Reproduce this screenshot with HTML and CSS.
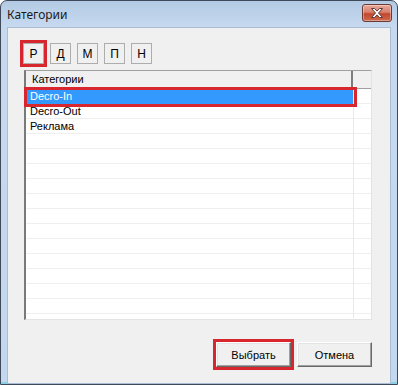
FILE: index.html
```html
<!DOCTYPE html>
<html lang="ru">
<head>
  <meta charset="UTF-8" />
  <title>Категории</title>
  <link rel="stylesheet" href="styles.css">
</head>
<body>
  <div class="window">
    <div class="titlebar">
      <span class="title">Категории</span>
      <button class="close" title="Закрыть">
        <svg width="14" height="10" viewBox="0 0 14 10">
          <path d="M1.5 0.5h3l2.5 2.6 2.5-2.6h3l-4 4.5 4 4.5h-3l-2.5-2.6-2.5 2.6h-3l4-4.5z" fill="#fff" stroke="#5a3b36" stroke-width="1" stroke-linejoin="round"/>
        </svg>
      </button>
    </div>

    <div class="client">
      <div class="letters">
        <button class="key marked">Р</button>
        <button class="key">Д</button>
        <button class="key">М</button>
        <button class="key">П</button>
        <button class="key">Н</button>
      </div>

      <div class="grid">
        <div class="grid-head">
          <div class="head-col">Категории</div>
          <div class="head-rest"></div>
        </div>
        <div class="grid-body">
          <div class="row selected"><span class="cell">Decro-In</span></div>
          <div class="row"><span class="cell">Decro-Out</span></div>
          <div class="row"><span class="cell">Реклама</span></div>
        </div>
      </div>

      <div class="actions">
        <button class="btn marked">Выбрать</button>
        <button class="btn">Отмена</button>
      </div>
    </div>
  </div>
</body>
</html>
```

FILE: styles.css
```css
body {
  margin: 0;
  background: #fff;
  font-family: "Liberation Sans", Arial, sans-serif;
}
.window {
  box-sizing: border-box;
  width: 398px;
  height: 385px;
  border: 1px solid #3e4a5a;
  border-radius: 7px 7px 0 0;
  padding: 0 7px 3px 7px;
  background: linear-gradient(to bottom, #b4cae4 0, #c6d9ef 26px, #c3d7ee 100%);
  box-shadow: inset 0 -2px 0 #8ad0e6;
}
.titlebar {
  height: 26px;
  display: flex;
  align-items: flex-start;
  justify-content: space-between;
}
.title {
  margin-left: -1px;
  margin-top: 5px;
  font-family: "Noto Sans", "Liberation Sans", sans-serif;
  font-size: 12px;
  color: #1a1a1a;
}
.close {
  width: 30px;
  height: 18px;
  margin-top: 3px;
  margin-right: -2px;
  padding: 0;
  border: 1px solid #6b3a33;
  border-radius: 3px;
  background: linear-gradient(to bottom, #e9a99c 0, #d8806d 45%, #c2472f 55%, #cf6a4c 100%);
  box-shadow: inset 0 0 0 1px rgba(255, 255, 255, 0.35);
  display: flex;
  align-items: center;
  justify-content: center;
}
.client {
  box-sizing: border-box;
  height: 355px;
  margin-top: 1px;
  background: #f0f0f0;
  padding: 15px 18px 15px 15px;
  box-shadow: 0 0 0 1px #a9bdd4;
}
.letters {
  display: flex;
  gap: 6px;
}
.key {
  width: 21px;
  height: 21px;
  padding: 0;
  border: 1px solid #adadad;
  background: #f0f0f0;
  font-family: "Liberation Sans", Arial, sans-serif;
  font-size: 12px;
  color: #000;
}
.marked {
  outline: 3px solid #d8262f;
}
.grid {
  box-sizing: border-box;
  width: 348px;
  height: 250px;
  margin: 6px 0 0 1px;
  border-style: solid;
  border-width: 1px 1px 1px 2px;
  border-color: #a0a0a0 #e3e3e3 #e3e3e3 #7a7a7a;
  background: #fff;
  font-size: 11px;
}
.grid-head {
  display: flex;
  height: 18px;
  background: #f0f0f0;
  border-bottom: 1px solid #a0a0a0;
  box-sizing: border-box;
}
.head-col {
  box-sizing: border-box;
  width: 327px;
  padding-left: 6px;
  line-height: 17px;
  border-right: 2px solid #7d7d7d;
}
.head-rest {
  flex: 1;
}
.grid-body {
  height: 229px;
  background:
    linear-gradient(to right, transparent 327px, #e8e8e8 327px, #e8e8e8 328px, transparent 328px),
    repeating-linear-gradient(to bottom, transparent 0, transparent 14px, #efefef 14px, #efefef 15px);
}
.row {
  position: relative;
  width: 327px;
  height: 15px;
  line-height: 15px;
}
.cell {
  padding-left: 4px;
}
.row.selected {
  background: #3399ff;
  color: #fff;
}
.row.selected::after {
  content: "";
  position: absolute;
  left: -2px;
  right: -4px;
  top: -2px;
  bottom: -3px;
  border: 3px solid #d8262f;
}
.actions {
  display: flex;
  justify-content: flex-end;
  gap: 6px;
  margin-top: 22px;
}
.btn {
  width: 75px;
  height: 25px;
  padding: 0;
  border: 1px solid;
  border-color: #fff #696969 #696969 #fff;
  box-shadow: inset -1px -1px 0 #a0a0a0, inset 1px 1px 0 #e3e3e3;
  background: #f0f0f0;
  font-family: "Liberation Sans", Arial, sans-serif;
  font-size: 11px;
  color: #000;
}
```
